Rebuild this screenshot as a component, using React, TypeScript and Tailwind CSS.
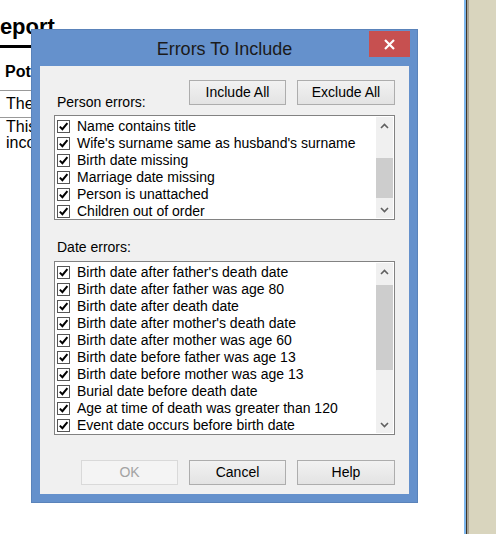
import React from 'react';

const PERSON_ERRORS = [
  'Name contains title',
  "Wife's surname same as husband's surname",
  'Birth date missing',
  'Marriage date missing',
  'Person is unattached',
  'Children out of order',
];

const DATE_ERRORS = [
  "Birth date after father's death date",
  'Birth date after father was age 80',
  'Birth date after death date',
  "Birth date after mother's death date",
  'Birth date after mother was age 60',
  'Birth date before father was age 13',
  'Birth date before mother was age 13',
  'Burial date before death date',
  'Age at time of death was greater than 120',
  'Event date occurs before birth date',
];

const font = { fontFamily: '"Liberation Sans", Arial, sans-serif' };

function Check() {
  return (
    <span className="w-[13px] h-[13px] border border-[#555] bg-white flex items-center justify-center shrink-0">
      <svg width="11" height="11" viewBox="0 0 11 11">
        <path d="M1.8 5.6 L4.4 8.2 L9.4 2.2" fill="none" stroke="#000" strokeWidth="2" />
      </svg>
    </span>
  );
}

function Chevron({ up }: { up?: boolean }) {
  return (
    <svg width="9" height="6" viewBox="0 0 9 6">
      <path d={up ? 'M1 5 L4.5 1.5 L8 5' : 'M1 1 L4.5 4.5 L8 1'} fill="none" stroke="#606060" strokeWidth="1.6" />
    </svg>
  );
}

function Btn({ label, disabled }: { label: string; disabled?: boolean }) {
  return (
    <div
      className={`h-[25px] flex items-center justify-center text-[14px] border ${
        disabled
          ? 'border-[#d9d9d9] bg-[#f4f4f4] text-[#a3a3a3]'
          : 'border-[#adadad] bg-gradient-to-b from-[#f2f2f2] to-[#e3e3e3] text-black'
      }`}
    >
      {label}
    </div>
  );
}

function CheckList({ items, height, thumbTop, thumbHeight }: { items: string[]; height: string; thumbTop: string; thumbHeight: string }) {
  return (
    <div className={`${height} border border-[#828282] bg-white flex p-[1px]`}>
      <div className="flex-1 flex flex-col pt-[1px]">
        {items.map(t => (
          <div key={t} className="h-[17px] flex items-center gap-[7px] pl-[1px] text-[14px] text-black whitespace-nowrap">
            <Check />
            <span>{t}</span>
          </div>
        ))}
      </div>
      <div className="w-[17px] bg-[#f0f0f0] flex flex-col">
        <div className="h-[17px] flex items-center justify-center"><Chevron up /></div>
        <div className={`${thumbTop} ${thumbHeight} bg-[#cdcdcd]`} />
        <div className="flex-1" />
        <div className="h-[17px] flex items-center justify-center"><Chevron /></div>
      </div>
    </div>
  );
}

export default function App() {
  return (
    <div className="relative w-[496px] h-[534px] overflow-hidden bg-white flex" style={font}>
      {/* page behind the dialog */}
      <div className="w-[464px] bg-white">
        <div className="w-[390px]">
          <h1 className="-ml-[16px] pt-[14px] text-[22px] leading-[26px] font-bold text-black">Report</h1>
          <div className="mt-[5px] h-[3px] bg-black" />
          <div className="pl-[5px] pt-[16px] pb-[10px] text-[16px] leading-[16px] font-bold border-b border-[#999]">Potential problems</div>
          <div className="pl-[6px] pt-[5px] pb-[5px] text-[16px] leading-[16px] border-b border-[#999]">These are the people found</div>
          <div className="pl-[6px] pt-[1px] text-[16px] leading-[16px]">
            This report lists each entry that may be<br />incorrect or incomplete
          </div>
        </div>
      </div>
      <div className="w-[2px] bg-[#7db6ec]" />
      <div className="w-[1px] bg-[#3c3428]" />
      <div className="w-[2px] bg-[#aaa596]" />
      <div className="flex-1 bg-[#d9d5be]" />

      {/* dialog */}
      <div className="absolute left-[31px] top-[29px] w-[387px] h-[474px] bg-[#6591cc] border border-[#5a83ba] flex flex-col">
        <div className="relative h-[36px] flex items-center justify-center">
          <span className="text-[18px] text-[#1b1b1b] pt-[3px]">Errors To Include</span>
          <div className="absolute right-[7px] top-[1px] w-[41px] h-[26px] bg-[#c75050] flex items-center justify-center">
            <svg width="11" height="11" viewBox="0 0 11 11">
              <path d="M1 1 L10 10 M10 1 L1 10" stroke="#fff" strokeWidth="2.2" />
            </svg>
          </div>
        </div>
        <div className="mx-[8px] h-[428px] bg-[#f0f0f0] px-[14px] pt-[14px] flex flex-col">
          <div className="h-[35px] flex justify-between">
            <span className="self-end pb-[5px] pl-[3px] text-[14px] leading-[16px] text-black">Person errors:</span>
            <div className="flex gap-[11px]">
              <div className="w-[97px]"><Btn label="Include All" /></div>
              <div className="w-[98px]"><Btn label="Exclude All" /></div>
            </div>
          </div>
          <CheckList items={PERSON_ERRORS} height="h-[105px]" thumbTop="mt-[24px]" thumbHeight="h-[40px]" />
          <div className="h-[41px] pt-[19px] pl-[3px] text-[14px] leading-[16px] text-black">Date errors:</div>
          <CheckList items={DATE_ERRORS} height="h-[174px]" thumbTop="mt-[5px]" thumbHeight="h-[85px]" />
          <div className="mt-[25px] flex justify-end gap-[11px]">
            <div className="w-[97px]"><Btn label="OK" disabled /></div>
            <div className="w-[97px]"><Btn label="Cancel" /></div>
            <div className="w-[98px]"><Btn label="Help" /></div>
          </div>
        </div>
      </div>
    </div>
  );
}
